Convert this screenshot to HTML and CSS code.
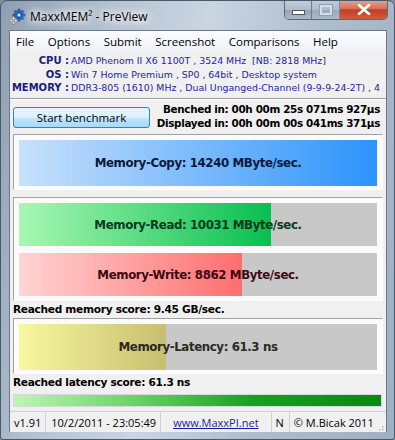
FILE: index.html
```html
<!DOCTYPE html>
<html>
<head>
  <meta charset="utf-8">
  <meta name="viewport" content="width=device-width">
  <title>MaxxMEM² - PreView</title>
  <link rel="stylesheet" href="styles.css">
</head>
<body>

  <div class="window">
    <div class="titlebar">
      <svg class="appicon" width="18" height="18" viewBox="0 0 18 18">
        <g fill="#2f6fd6" stroke="#1a3f8a" stroke-width="0.6">
          <circle cx="11" cy="7" r="4.2"/>
          <rect x="10" y="1" width="2" height="12"/>
          <rect x="5" y="6" width="12" height="2"/>
          <rect x="10" y="1" width="2" height="12" transform="rotate(45 11 7)"/>
          <rect x="10" y="1" width="2" height="12" transform="rotate(-45 11 7)"/>
        </g>
        <circle cx="11" cy="7" r="1.6" fill="#cfe0ff"/>
        <g fill="#f4f4f4" stroke="#777" stroke-width="0.6">
          <circle cx="5.5" cy="12.5" r="3"/>
          <rect x="4.8" y="8.3" width="1.4" height="8.4"/>
          <rect x="1.3" y="11.8" width="8.4" height="1.4"/>
        </g>
        <circle cx="5.5" cy="12.5" r="1" fill="#999"/>
      </svg>
      <span class="title">MaxxMEM² - PreView</span>
      <div class="controls">
        <div class="ctl min"><span class="dash"></span></div>
        <div class="ctl max"><span class="box"></span></div>
        <div class="ctl close">
          <svg width="14" height="11" viewBox="0 0 14 11">
            <path d="M2 1 L12 10 M12 1 L2 10" stroke="#fff" stroke-width="2.6" stroke-linecap="round"/>
          </svg>
        </div>
      </div>
    </div>

    <div class="client">
      <div class="menubar">
        <span>File</span>
        <span>Options</span>
        <span>Submit</span>
        <span>Screenshot</span>
        <span>Comparisons</span>
        <span>Help</span>
      </div>

      <div class="info">
        <div class="label">CPU :</div>
        <div class="value">AMD Phenom II X6 1100T , 3524 MHz &nbsp;[NB: 2818 MHz]</div>
        <div class="label">OS :</div>
        <div class="value">Win 7 Home Premium , SP0 , 64bit , Desktop system</div>
        <div class="label">MEMORY :</div>
        <div class="value">DDR3-805 (1610) MHz , Dual Unganged-Channel (9-9-9-24-2T) , 4</div>
      </div>

      <div class="bench">
        <button class="start">Start benchmark</button>
        <div class="times">
          <div>Benched in: 00h 00m 25s 071ms 927µs</div>
          <div>Displayed in: 00h 00m 00s 041ms 371µs</div>
        </div>
      </div>

      <div class="panel">
        <div class="bar tall">
          <div class="fill copy" style="width: 100%"></div>
          <span class="label copy-text">Memory-Copy: 14240 MByte/sec.</span>
        </div>
      </div>

      <div class="panel pair">
        <div class="bar">
          <div class="fill read" style="width: 70.4%"></div>
          <span class="label read-text">Memory-Read: 10031 MByte/sec.</span>
        </div>
        <div class="bar">
          <div class="fill write" style="width: 62.2%"></div>
          <span class="label write-text">Memory-Write: 8862 MByte/sec.</span>
        </div>
      </div>

      <div class="score">Reached memory score: 9.45 GB/sec.</div>

      <div class="panel">
        <div class="bar tall">
          <div class="fill latency" style="width: 41%"></div>
          <span class="label latency-text">Memory-Latency: 61.3 ns</span>
        </div>
      </div>

      <div class="score">Reached latency score: 61.3 ns</div>

      <div class="progress"></div>

      <div class="statusbar">
        <span class="cell ver">v1.91</span>
        <span class="cell date">10/2/2011 - 23:05:49</span>
        <span class="cell link">www.MaxxPI.net</span>
        <span class="cell flag">N</span>
        <span class="cell last">© M.Bicak 2011</span>
        <span class="grip">
          <svg width="9" height="9" viewBox="0 0 9 9" fill="#b8b8b8">
            <rect x="7" y="1" width="1.5" height="1.5"/>
            <rect x="4" y="4" width="1.5" height="1.5"/>
            <rect x="7" y="4" width="1.5" height="1.5"/>
            <rect x="1" y="7" width="1.5" height="1.5"/>
            <rect x="4" y="7" width="1.5" height="1.5"/>
            <rect x="7" y="7" width="1.5" height="1.5"/>
          </svg>
        </span>
      </div>
    </div>
  </div>

</body>
</html>
```

FILE: styles.css
```css
html, body {
  margin: 0;
  padding: 0;
  background: #7f8fa0;
}
.window {
  width: 395px;
  height: 440px;
  box-sizing: border-box;
  padding: 0 7px 7px 8px;
  border: 1px solid #48596b;
  border-radius: 7px 7px 3px 3px;
  background: linear-gradient(100deg, #8e9fb1 0%, #b7c5d3 25%, #c9d5e1 45%, #aebdcc 70%, #9fb0c2 100%);
  display: flex;
  flex-direction: column;
  overflow: hidden;
}

/* title bar */
.titlebar {
  height: 29px;
  flex: none;
  display: flex;
  align-items: center;
  position: relative;
  font-family: "Open Sans", sans-serif;
  font-size: 12px;
  color: #000;
}
.appicon {
  margin: 2px 4px 0 -1px;
}
.title {
  margin-top: 1px;
  text-shadow: 0 0 6px #fff, 0 0 10px #fff, 0 0 12px #fff;
}
.controls {
  position: absolute;
  top: -1px;
  right: -1px;
  display: flex;
  border: 1px solid #5a6878;
  border-top: none;
  border-radius: 0 0 5px 5px;
  overflow: hidden;
}
.ctl {
  height: 19px;
  display: flex;
  align-items: center;
  justify-content: center;
  box-sizing: border-box;
}
.ctl.min, .ctl.max {
  width: 27px;
  background: linear-gradient(#c3cfdb 0%, #aebccb 50%, #94a3b5 51%, #aab9ca 100%);
  border-right: 1px solid #6f7e8f;
}
.ctl.max {
  width: 28px;
  opacity: 0.8;
}
.ctl .dash {
  width: 11px;
  height: 3px;
  background: #fff;
  border: 1px solid #4a5868;
  margin-top: 5px;
}
.ctl .box {
  width: 8px;
  height: 6px;
  border: 2px solid #dfe5ec;
  outline: 1px solid #8a98a8;
}
.ctl.close {
  width: 47px;
  background: linear-gradient(#e8a493 0%, #d4715c 45%, #c23e25 52%, #d55b3f 100%);
}

/* client area */
.client {
  flex: 1;
  background: #f0f0f0;
  border: 1px solid #6a7888;
  border-bottom: none;
  display: flex;
  flex-direction: column;
  font-family: "DejaVu Sans", sans-serif;
}
.menubar {
  height: 20px;
  display: flex;
  align-items: center;
  padding-left: 6px;
  background: linear-gradient(#fbfcfe, #eef2f8);
  font-family: "Open Sans", sans-serif;
  font-size: 11.5px;
  color: #000;
}
.menubar span {
  margin-right: 13.5px;
}

.info {
  display: grid;
  grid-template-columns: 59px auto;
  column-gap: 2px;
  padding: 3px 0 3px 0;
  height: 41px;
  line-height: 13.5px;
  font-size: 9.4px;
  white-space: nowrap;
  overflow: hidden;
  border-bottom: 1px solid #a0a0a0;
  box-shadow: 0 1px 0 #fff;
}
.info .label {
  text-align: right;
  font-weight: bold;
  font-size: 10px;
  color: #1c1c78;
}
.info .value {
  color: #2424a0;
}

.bench {
  display: flex;
  align-items: center;
  justify-content: space-between;
  height: 32px;
  padding: 1px 6px 0 3px;
}
.start {
  width: 137px;
  height: 21px;
  margin-top: 2px;
  border: 1px solid #3c7fb1;
  border-radius: 3px;
  background: linear-gradient(#eaf6fd 0%, #d9f0fc 50%, #bee6fd 51%, #a7d9f5 100%);
  font-family: "Open Sans", sans-serif;
  font-size: 11.5px;
  color: #000;
  padding: 0;
}
.times {
  font-size: 10.4px;
  font-weight: bold;
  letter-spacing: -0.35px;
  line-height: 14px;
  text-align: right;
  white-space: nowrap;
  color: #000;
}

.panel {
  margin: 2px 3px 0 3px;
  border: 1px solid #a0a0a0;
  border-right-color: #fff;
  border-bottom-color: #fff;
  background: #fbfbfb;
  padding: 5px 5px 3px 5px;
}
.panel.pair {
  margin-top: 7px;
  padding-bottom: 4px;
  display: flex;
  flex-direction: column;
  gap: 7px;
}
.bar {
  position: relative;
  height: 43px;
  background: #c8c8c8;
  display: flex;
  align-items: center;
  justify-content: center;
}
.bar.tall {
  height: 46px;
}
.fill {
  position: absolute;
  left: 0;
  top: 0;
  bottom: 0;
}
.fill.copy {
  background: linear-gradient(90deg, #c8e1fb, #2c93fc);
}
.fill.read {
  background: linear-gradient(90deg, #a8f7b4, #08bf50);
}
.fill.write {
  background: linear-gradient(90deg, #ffd4d4, #ff6e6e);
}
.fill.latency {
  background: linear-gradient(90deg, #f8f8a0, #c7bf70);
}
.bar .label {
  position: relative;
  font-size: 11.8px;
  font-weight: bold;
  letter-spacing: -0.4px;
}
.copy-text { color: #0c1838; }
.read-text { color: #0b3a1c; }
.write-text { color: #3c0a12; }
.latency-text { color: #2a2a20; }

.score {
  font-size: 10.6px;
  font-weight: bold;
  letter-spacing: -0.3px;
  color: #000;
  padding-left: 3px;
  height: 15px;
  line-height: 16px;
}

.progress {
  margin: 5px 4px 0 3px;
  height: 11px;
  background: linear-gradient(90deg, #bff5b5 0%, #6fd86a 30%, #16a21c 65%, #078b0e 100%);
  border: 1px solid #d8d8d8;
}

.statusbar {
  margin-top: 4px;
  height: 20px;
  border-top: 1px solid #d0d0d0;
  display: flex;
  align-items: center;
  font-family: "Open Sans", sans-serif;
  font-size: 11px;
  color: #000;
  white-space: nowrap;
}
.statusbar .cell {
  height: 100%;
  display: flex;
  align-items: center;
  border-right: 1px solid #d0d0d0;
}
.statusbar .ver {
  padding: 0 4px 0 4px;
}
.statusbar .date {
  padding: 0 4px 0 5px;
}
.statusbar .link {
  padding: 0 12px 0 12px;
  color: #1a1aa0;
  text-decoration: underline;
}
.statusbar .flag {
  padding: 0 5px 0 4px;
}
.statusbar .last {
  padding: 0 0 0 4px;
  border-right: none;
}
.grip {
  margin-left: auto;
  margin-right: 2px;
  align-self: flex-end;
  height: 10px;
}
```
